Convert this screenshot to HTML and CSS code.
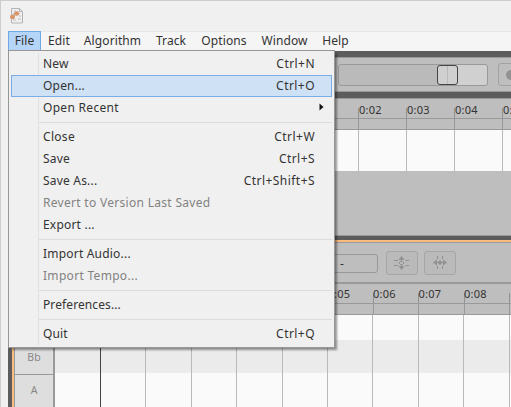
FILE: index.html
```html
<!DOCTYPE html>
<html lang="en">
<head>
<meta charset="utf-8">
<title>Audio editor</title>
<link rel="stylesheet" href="styles.css">
</head>
<body>
<div class="window">
  <header class="titlebar">
    <svg width="16" height="18" viewBox="0 0 16 18"><path d="M3.500 1.500h8l3 3v11.500h-11z" fill="#eee" stroke="#b4b4b4"/><path d="M11.500 1.500v3h3" fill="none" stroke="#b4b4b4"/><path d="M5 13h3M10 12h3M6 4h2M11 9h2" stroke="#c2c2c2"/><path d="M3 9.500l2-2 2-2M8 4.500l-2 5" stroke="#a7a09c" fill="none"/><ellipse cx="4.500" cy="10" rx="2.500" ry="2.200" fill="#d99467"/><ellipse cx="8.800" cy="6.500" rx="2.500" ry="2.200" fill="#d99467"/></svg>
  </header>
  <nav class="menubar"><span class="active" style="width:33px"><b>File</b></span><span style="width:36px"><b>Edit</b></span><span style="width:71px"><b>Algorithm</b></span><span style="width:46px"><b>Track</b></span><span style="width:60px"><b>Options</b></span><span style="width:61px"><b>Window</b></span><span style="width:41px"><b>Help</b></span></nav>
  <main class="client">
    <section class="transport">
      <div class="slider"><i class="knob"></i></div><div class="record"><i></i></div>
    </section>
    <section class="overview">
      <div class="ruler"><div class="mark">0:02</div><div class="mark">0:03</div><div class="mark">0:04</div><div class="mark">0:05</div></div>
      <div class="subruler"><i></i><i></i><i></i><i></i></div>
      <div class="wave"><i></i><i></i><i></i><i></i></div>
    </section>
    <section class="editor">
      <div class="tools">
        <div class="combo">-</div>
        <div class="tool"><svg width="18" height="16" viewBox="0 0 18 16"><path d="M1 5.500h4M1 10.500h4M12.500 5.500h3.500M12.500 10.500h3.500M8.500 2v4M8.500 10v4M7.500 6.500h2l1.500 1.500-1.500 1.500h-2L6 8z"/><path class="solid" d="M8.500 1l3 4h-6zM8.500 15l3-4h-6z"/></svg></div>
        <div class="tool"><svg width="18" height="16" viewBox="0 0 18 16"><path d="M6.500 1v3M11.500 1v3M6.500 11v3M11.500 11v3M3 7.500h12"/><path class="solid" d="M2 7.500l4-3v6zM16 7.500l-4-3v6zM9 5l2.500 2.500L9 10 6.500 7.500z"/></svg></div>
      </div>
      <div class="ruler lower"><div class="mark">0:05</div><div class="mark">0:06</div><div class="mark">0:07</div><div class="mark">0:08</div><div class="mark"></div></div>
      <div class="subruler lower"><i></i><i></i><i></i><i></i><i></i></div>
      <div class="roll">
        <div class="keys"><div class="key">Bb</div><div class="key">A</div></div>
        <div class="grid"><svg width="457" height="92" viewBox="0 0 457 92"><path d="M90.500 0v92M136.500 0v92M181.500 0v92M227.500 0v92M272.500 0v92M317.500 0v92M363.500 0v92M408.500 0v92M454.500 0v92" stroke="#b9b9b9"/><path d="M45.500 0v92" stroke="#444"/></svg></div>
      </div>
    </section>
  </main>
  <div class="menu">
    <div class="item"><span>New</span><kbd>Ctrl+N</kbd></div>
    <div class="item selected"><span>Open...</span><kbd>Ctrl+O</kbd></div>
    <div class="item"><span class="wide">Open Recent</span><svg class="arrow" width="5" height="8" viewBox="0 0 5 8"><path d="M.5 .5L4.500 4 .5 7.500z"/></svg></div>
    <hr>
    <div class="item"><span class="wide">Close</span><kbd>Ctrl+W</kbd></div>
    <div class="item"><span>Save</span><kbd>Ctrl+S</kbd></div>
    <div class="item"><span>Save As...</span><kbd>Ctrl+Shift+S</kbd></div>
    <div class="item disabled"><span class="wide">Revert to Version Last Saved</span></div>
    <div class="item"><span>Export ...</span></div>
    <hr>
    <div class="item"><span>Import Audio...</span></div>
    <div class="item disabled"><span class="wide">Import Tempo...</span></div>
    <hr>
    <div class="item"><span class="tight">Preferences...</span></div>
    <hr>
    <div class="item"><span class="tight">Quit</span><kbd>Ctrl+Q</kbd></div>
  </div>
</div>
</body>
</html>
```
FILE: styles.css
```css
* { box-sizing: border-box; }
body { margin: 0; font: 12px "Noto Sans", sans-serif; color: #333; }
svg { display: block; }
.window { position: relative; width: 511px; height: 407px; overflow: hidden; background: #f0f0f0; border: 1px solid #ccc; border-width: 1px 0 0 1px; padding-left: 7px; }
.titlebar { height: 30px; padding: 6px 0 0 0; }
.menubar { display: flex; height: 20px; background: #f5f5f5; border-top: 1px solid #e7e7e7; line-height: 18px; }
.menubar span { display: flex; justify-content: center; }
.menubar b { font-weight: 400; white-space: nowrap; letter-spacing: .1px; }
.menubar .active { height: 20px; margin-top: -1px; line-height: 18px; background: #b5d5f8; border: 1px solid #70a8e5; }
.client { background: #5c5c5c; height: 356px; padding-top: 6px; }
.transport { display: flex; height: 35px; padding: 6px 0 0 330px; background: #bebebe; border: 1px solid #999; border-width: 1px 0; }
.slider { width: 150px; height: 22px; flex: none; border: 1px solid #999; border-radius: 3px; background: linear-gradient(90deg, #bababa 110px, #d0d0d0 110px); padding: 0 0 0 98px; }
.knob { display: block; width: 21px; height: 20px; border: 1.500px solid #444; border-radius: 3px; background: linear-gradient(90deg, #d0d0d0 9px, #b9b9b9 9px, #b9b9b9 10px, #d0d0d0 10px); }
.record { width: 33px; height: 23px; margin: -1px 0 0 10px; flex: none; border: 1px solid #a2a2a2; border-radius: 3px; padding: 6px 0 0 7px; }
.record i { display: block; width: 10px; height: 10px; border-radius: 50%; background: #929292; }
.overview { margin-top: 6px; height: 138px; background: #bebebe; border: 1px solid #999; border-width: 1px 0; }
.ruler { display: flex; height: 20px; padding-left: 350px; overflow: hidden; border-bottom: 1px solid #999; }
.mark { width: 48px; flex: none; font-size: 11px; letter-spacing: .25px; line-height: 21px; padding-left: 1px; background: linear-gradient(#929292, #929292) 0 9px / 1px 10px no-repeat; }
.subruler, .wave { display: flex; padding-left: 350px; overflow: hidden; }
.subruler { height: 11px; border-bottom: 1px solid #999; }
.subruler i, .wave i { width: 48px; flex: none; border-left: 1px solid #999; }
.wave { height: 41px; background: #fafafa; }
.wave i { border-color: #b9b9b9; }
.editor { margin: 4px 0 0 4px; height: 167px; background: #bebebe; border: 2px solid #fabb7e; border-width: 2px 0 0 2px; }
.tools { display: flex; height: 42px; padding: 8px 0 0 272px; border: 1px solid #999; border-width: 1px 0 2px 1px; }
.combo { width: 91px; height: 19px; flex: none; margin: 3px 8px 0 0; padding-left: 52px; line-height: 17px; border: 1px solid #999; border-radius: 3px; }
.tool { width: 32px; height: 24px; flex: none; margin-right: 6px; padding: 3px 0 0 6px; border: 1px solid #a6a6a6; border-radius: 3px; background: #bababa; }
.tool path { fill: none; stroke: #929292; }
.tool .solid { fill: #929292; stroke: none; }
.ruler.lower, .subruler.lower { padding-left: 313px; }
.lower .mark, .subruler.lower i { width: 45.5px; }
.lower .mark { line-height: 20px; padding-left: 0; text-indent: .4px; }
.roll { display: flex; height: 92px; }
.keys { width: 41px; border: 1px solid #999; border-width: 0 2px 0 1px; background: #dedede; }
.key { height: 60px; border-bottom: 1px solid #999; padding-top: 34px; line-height: 16px; text-align: center; font-size: 10.500px; color: #888; }
.key + .key { padding-top: 7px; border: 0; height: 32px; }
.grid { flex: 1; overflow: hidden; background: linear-gradient(#fafafa 25px, #ebebeb 25px, #ebebeb 58px, #fafafa 58px); }
.menu { position: absolute; left: 7px; top: 49px; width: 327px; height: 298px; padding: 2px; background: linear-gradient(90deg, transparent 29px, #e0e0e0 29px, #e0e0e0 30px, transparent 30px) 0 2px / 100% 292px no-repeat #f0f0f0; border: 1px solid #979797; box-shadow: 3px 3px 2px -1px #0006; }
.item { display: flex; align-items: center; justify-content: space-between; height: 22px; padding: 0 17px 2px 32px; white-space: nowrap; letter-spacing: .2px; }
.item kbd { font: inherit; letter-spacing: .45px; }
.wide { letter-spacing: .3px; }
.tight { letter-spacing: .1px; }
.item.selected { padding: 0 16px 2px 31px; background: #cfe1f4; border: 1px solid #79ade5; }
.item.disabled { color: #828282; }
.arrow { margin-right: -9px; }
.arrow path { fill: #111; }
.menu hr { height: 1px; margin: 3px 0 3px 28px; border: 0; background: #dcdcdc; }
```
